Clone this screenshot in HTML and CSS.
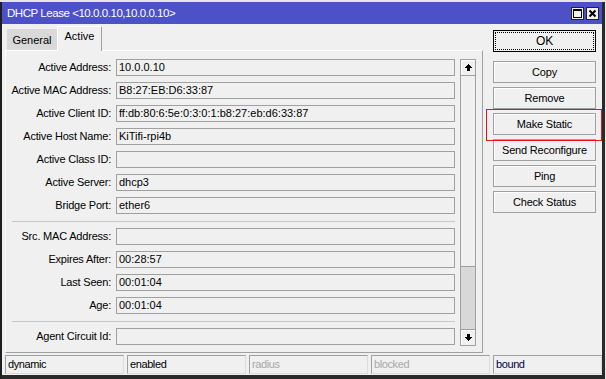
FILE: index.html
```html
<!DOCTYPE html>
<html>
<head>
<meta charset="utf-8">
<link rel="stylesheet" href="styles.css">
</head>
<body>
<div class="window">
  <div class="titlebar">
    <span class="title">DHCP Lease &lt;10.0.0.10,10.0.0.10&gt;</span>
    <div class="tbtns">
      <span class="tbtn"><svg width="11" height="11" viewBox="0 0 11 11" shape-rendering="crispEdges"><rect x="1.5" y="2.5" width="8" height="7" fill="none" stroke="#000"/><rect x="1" y="1" width="9" height="2" fill="#000"/></svg></span>
      <span class="tbtn"><svg width="11" height="11" viewBox="0 0 11 11"><path d="M2.5 2.5 L8.5 8.5 M8.5 2.5 L2.5 8.5" stroke="#000" stroke-width="2"/></svg></span>
    </div>
  </div>
  <div class="main">
    <div class="left">
      <div class="tabs">
        <div class="tab">General</div>
        <div class="tab active">Active</div>
      </div>
      <div class="panel">
        <div class="fields">
          <div class="row"><span class="lbl">Active Address:</span><span class="box">10.0.0.10</span></div>
          <div class="row"><span class="lbl">Active MAC Address:</span><span class="box">B8:27:EB:D6:33:87</span></div>
          <div class="row"><span class="lbl">Active Client ID:</span><span class="box">ff:db:80:6:5e:0:3:0:1:b8:27:eb:d6:33:87</span></div>
          <div class="row"><span class="lbl">Active Host Name:</span><span class="box">KiTifi-rpi4b</span></div>
          <div class="row"><span class="lbl">Active Class ID:</span><span class="box"></span></div>
          <div class="row"><span class="lbl">Active Server:</span><span class="box">dhcp3</span></div>
          <div class="row"><span class="lbl">Bridge Port:</span><span class="box">ether6</span></div>
          <div class="sep"></div>
          <div class="row"><span class="lbl">Src. MAC Address:</span><span class="box"></span></div>
          <div class="row"><span class="lbl">Expires After:</span><span class="box">00:28:57</span></div>
          <div class="row"><span class="lbl">Last Seen:</span><span class="box">00:01:04</span></div>
          <div class="row"><span class="lbl">Age:</span><span class="box">00:01:04</span></div>
          <div class="sep"></div>
          <div class="row"><span class="lbl">Agent Circuit Id:</span><span class="box"></span></div>
        </div>
        <div class="sb">
          <div class="sb-btn"><svg width="7" height="7" viewBox="0 0 7 7" shape-rendering="crispEdges"><polygon points="3.5,0 7,4 5,4 5,7 2,7 2,4 0,4" fill="#000"/></svg></div>
          <div class="sb-track"></div>
          <div class="sb-thumb"></div>
          <div class="sb-btn down"><svg width="7" height="7" viewBox="0 0 7 7" shape-rendering="crispEdges"><polygon points="3.5,7 7,3 5,3 5,0 2,0 2,3 0,3" fill="#000"/></svg></div>
        </div>
      </div>
    </div>
    <div class="buttons">
      <div class="btn ok">OK</div>
      <div class="btn first">Copy</div>
      <div class="btn">Remove</div>
      <div class="btn">Make Static</div>
      <div class="btn">Send Reconfigure</div>
      <div class="btn">Ping</div>
      <div class="btn">Check Status</div>
    </div>
  </div>
  <div class="status">
    <span class="seg">dynamic</span>
    <span class="seg">enabled</span>
    <span class="seg dim">radius</span>
    <span class="seg dim">blocked</span>
    <span class="seg last navy">bound</span>
  </div>
  <div class="highlight"></div>
</div>
</body>
</html>
```

FILE: styles.css
```css
html, body {
  margin: 0;
  padding: 0;
}
body {
  width: 606px;
  height: 379px;
  overflow: hidden;
  background: #e6e6e6;
  font-family: "Liberation Sans", Arial, sans-serif;
  font-size: 11px;
  color: #000;
}
.window {
  position: relative;
  box-sizing: border-box;
  width: 605px;
  height: 377px;
  margin-top: 2px;
  background: #f0f0f0;
  border-left: 2px solid #1e1e1e;
  border-right: 3px solid #2a2a2a;
  border-bottom: 4px solid #2a2a2a;
  display: flex;
  flex-direction: column;
}
.titlebar {
  height: 22px;
  flex: 0 0 22px;
  background: #4c51c8;
  display: flex;
  align-items: center;
  justify-content: space-between;
  padding: 0 3px 0 5px;
}
.title {
  color: #fff;
  font-size: 11.5px;
  letter-spacing: -0.45px;
}
.tbtns {
  display: flex;
  gap: 2px;
}
.tbtn {
  box-sizing: border-box;
  width: 13px;
  height: 13px;
  border: 1px solid #222;
  background: #f0f0f0;
  display: flex;
  align-items: center;
  justify-content: center;
}
.main {
  display: flex;
  padding: 2px 0 0 3px;
}
.tabs {
  display: flex;
  align-items: flex-end;
  height: 24px;
  padding-left: 2px;
}
.tab {
  box-sizing: border-box;
  height: 21px;
  width: 50px;
  background: #d9d9d9;
  text-align: center;
  line-height: 21px;
  padding-top: 1px;
}
.tab.active {
  position: relative;
  width: 45px;
  height: 25px;
  margin-bottom: -1px;
  background: #f0f0f0;
  border-top: 1px solid #fff;
  border-left: 1px solid #fff;
  border-right: 1px solid #a0a0a0;
  line-height: 19px;
  padding-top: 0;
}
.panel {
  box-sizing: border-box;
  width: 478px;
  height: 303px;
  display: flex;
  padding: 8px 6px 6px 0;
  border: 1px solid #a0a0a0;
  border-top-color: #fff;
  border-left-color: #fff;
}
.fields {
  display: flex;
  flex-direction: column;
  gap: 6px;
  width: 449px;
}
.row {
  display: flex;
  height: 17px;
}
.lbl {
  box-sizing: border-box;
  width: 110px;
  padding-right: 5px;
  text-align: right;
  line-height: 17px;
  letter-spacing: -0.2px;
  white-space: nowrap;
}
.box {
  box-sizing: border-box;
  width: 339px;
  height: 17px;
  border: 1px solid #a0a0a0;
  padding-left: 2px;
  line-height: 15px;
  letter-spacing: 0;
  white-space: nowrap;
  overflow: hidden;
}
.sep {
  height: 2px;
  margin-left: 6px;
  border-bottom: 1px solid #c8c8c8;
  box-sizing: border-box;
}
.sb {
  box-sizing: border-box;
  width: 16px;
  margin-left: 5px;
  border: 1px solid #a0a0a0;
  display: flex;
  flex-direction: column;
  background: #f0f0f0;
}
.sb-btn {
  height: 15px;
  flex: 0 0 15px;
  border-bottom: 1px solid #a0a0a0;
  box-shadow: inset 1px 1px #fff;
  display: flex;
  align-items: center;
  justify-content: center;
}
.sb-btn.down {
  border-bottom: none;
  border-top: 1px solid #a0a0a0;
}
.sb-track {
  flex: 1;
}
.sb-thumb {
  height: 62px;
  background: #d8d8d8;
  border-top: 1px solid #a0a0a0;
}
.buttons {
  display: flex;
  flex-direction: column;
  gap: 4px;
  margin-left: 10px;
  padding-top: 4px;
}
.btn {
  box-sizing: border-box;
  width: 103px;
  height: 22px;
  border: 1px solid #a0a0a0;
  box-shadow: inset 1px 1px #fff;
  background: #f0f0f0;
  text-align: center;
  line-height: 20px;
  letter-spacing: -0.2px;
}
.btn.ok {
  border-color: #000;
  outline: 1px dotted #000;
  outline-offset: -3px;
  box-shadow: none;
  font-size: 12px;
}
.btn.first {
  margin-top: 5px;
}
.status {
  display: flex;
  gap: 3px;
  margin-top: 2px;
  padding-left: 3px;
}
.seg {
  box-sizing: border-box;
  width: 119px;
  height: 19px;
  border: 1px solid #a0a0a0;
  border-right-color: #dcdcdc;
  border-bottom-color: #dcdcdc;
  padding-left: 2px;
  line-height: 17px;
  letter-spacing: -0.4px;
}
.seg.last {
  width: 109px;
}
.dim {
  color: #a8a8a8;
}
.navy {
  color: #00004a;
}
.highlight {
  position: absolute;
  left: 484px;
  top: 107px;
  width: 116px;
  height: 32px;
  box-sizing: border-box;
  border: 1px solid #e8141a;
}
```
